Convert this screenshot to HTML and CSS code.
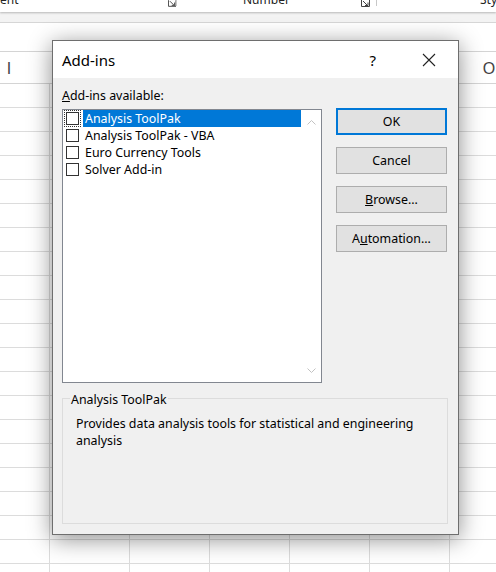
FILE: index.html
```html
<!DOCTYPE html>
<html lang="en">
<head>
  <meta charset="UTF-8">
  <meta name="viewport" content="width=device-width, initial-scale=1.0">
  <title>Add-ins</title>
  <link rel="stylesheet" href="styles.css">
</head>
<body>
  <div class="sheet">
    <div class="ribbon">
      <div class="grp grp-first">
        <span class="grp-label">ent</span>
        <svg class="launcher" width="9" height="7" viewBox="0 0 9 7"><path d="M0.5 0v6.5H8.5V0M2 1l5 5M4 5.5h3v-3" fill="none" stroke="#444" stroke-width="1"/></svg>
      </div>
      <div class="grp grp-number">
        <span class="grp-label">Number</span>
        <svg class="launcher" width="9" height="7" viewBox="0 0 9 7"><path d="M0.5 0v6.5H8.5V0M2 1l5 5M4 5.5h3v-3" fill="none" stroke="#444" stroke-width="1"/></svg>
      </div>
      <div class="grp grp-last">
        <span class="grp-label">Styles</span>
      </div>
    </div>
    <div class="ribbon-band"></div>
    <div class="formula"></div>
    <div class="col-heads">
      <span>I</span><span></span><span></span><span></span><span></span><span></span><span>O</span>
    </div>
    <div class="grid"></div>
  </div>

  <div class="dialog">
    <div class="titlebar">
      <span class="title">Add-ins</span>
      <span class="help">?</span>
      <svg class="close" width="14" height="14" viewBox="0 0 14 14"><path d="M1 1l12 12M13 1L1 13" stroke="#222" stroke-width="1.1" fill="none"/></svg>
    </div>
    <div class="dlg-body">
      <div class="top">
        <div class="left">
          <div class="caption"><u>A</u>dd-ins available:</div>
          <div class="listbox">
            <div class="items">
              <div class="item selected">
                <span class="chk-cell focus"><span class="chk"></span></span>
                <span class="item-text">Analysis ToolPak</span>
              </div>
              <div class="item">
                <span class="chk-cell"><span class="chk"></span></span>
                <span class="item-text">Analysis ToolPak - VBA</span>
              </div>
              <div class="item">
                <span class="chk-cell"><span class="chk"></span></span>
                <span class="item-text">Euro Currency Tools</span>
              </div>
              <div class="item">
                <span class="chk-cell"><span class="chk"></span></span>
                <span class="item-text">Solver Add-in</span>
              </div>
            </div>
            <div class="scroll">
              <svg width="9" height="5" viewBox="0 0 9 5"><path d="M0.5 4.5l4-4 4 4" fill="none" stroke="#c2c2c2" stroke-width="1"/></svg>
              <svg width="9" height="5" viewBox="0 0 9 5"><path d="M0.5 0.5l4 4 4-4" fill="none" stroke="#c2c2c2" stroke-width="1"/></svg>
            </div>
          </div>
        </div>
        <div class="buttons">
          <button class="btn default">OK</button>
          <button class="btn">Cancel</button>
          <button class="btn"><u>B</u>rowse...</button>
          <button class="btn">A<u>u</u>tomation...</button>
        </div>
      </div>
      <fieldset class="group">
        <legend>Analysis ToolPak</legend>
        <p>Provides data analysis tools for statistical and engineering analysis</p>
      </fieldset>
    </div>
  </div>
</body>
</html>
```

FILE: styles.css
```css
body {
  margin: 0;
  width: 496px;
  height: 572px;
  overflow: hidden;
  background: #fff;
  font-family: "Noto Sans", sans-serif;
  color: #000;
}

.sheet {
  width: 496px;
}

/* ribbon strip at the very top */
.ribbon {
  height: 12px;
  display: flex;
  background: #fff;
  overflow: hidden;
  font-size: 12px;
  box-shadow: 0 1px 2px rgba(0, 0, 0, 0.25);
  position: relative;
}

.grp {
  display: flex;
  align-items: flex-start;
  flex: none;
}

.grp-label {
  margin-top: -8px;
  line-height: 16px;
  color: #222;
}

.grp-first {
  width: 176px;
  border-right: 1px solid #c8c8c8;
  height: 6px;
}

.grp-first .launcher {
  margin-left: 149px;
}

.grp-number {
  width: 199px;
  border-right: 1px solid #c8c8c8;
  height: 6px;
}

.grp-number .grp-label {
  margin-left: 66px;
}

.grp-number .launcher {
  margin-left: 71px;
}

.grp-last .grp-label {
  margin-left: 103px;
}

.ribbon-band {
  height: 10px;
  background: #f3f3f3;
  border-bottom: 1px solid #d6d6d6;
}

.formula {
  height: 28px;
  border-bottom: 1px solid #d4d4d4;
}

.col-heads {
  height: 31px;
  display: flex;
  margin-left: -31px;
  border-bottom: 1px solid #d4d4d4;
  font-family: "Liberation Sans", sans-serif;
  font-size: 16px;
  color: #444;
}

.col-heads span {
  flex: none;
  width: 80px;
  text-align: center;
  line-height: 33px;
}

.grid {
  height: 488px;
  background-image:
    repeating-linear-gradient(to bottom, transparent 0 23px, #dcdcdc 23px 24px),
    repeating-linear-gradient(to right, transparent 0 49px, #dcdcdc 49px 50px, transparent 50px 80px);
  background-size: 496px 488px, 80px 488px;
}

/* dialog window */
.dialog {
  position: absolute;
  left: 52px;
  top: 40px;
  width: 405px;
  height: 493px;
  border: 1px solid #6e6e6e;
  background: #f0f0f0;
  box-shadow: 0 4px 22px rgba(0, 0, 0, 0.45);
  font-size: 12.4px;
}

.titlebar {
  height: 37px;
  background: #fff;
  display: flex;
  align-items: center;
  padding: 0 22px 0 9px;
}

.title {
  flex: 1;
  font-size: 15px;
}

.help {
  font-size: 15px;
  margin-right: 46px;
}

.dlg-body {
  padding: 10px 10px 11px 9px;
}

.top {
  display: flex;
  gap: 14px;
}

.left {
  width: 260px;
}

.caption {
  line-height: 16px;
  margin-bottom: 5px;
}

.listbox {
  height: 272px;
  border: 1px solid #828790;
  background: #fff;
  display: flex;
}

.items {
  flex: 1;
  padding-left: 1px;
}

.item {
  display: flex;
  height: 17px;
  align-items: center;
}

.chk-cell {
  width: 17px;
  height: 17px;
  display: flex;
  align-items: center;
  justify-content: center;
  box-sizing: border-box;
  margin-right: 2px;
}

.chk-cell.focus {
  border: 1px dotted #333;
}

.chk {
  width: 11px;
  height: 11px;
  border: 1px solid #333;
  background: #fff;
}

.item-text {
  flex: 1;
  height: 17px;
  line-height: 17px;
  padding-left: 2px;
  white-space: nowrap;
}

.item.selected .item-text {
  background: #0078d7;
  color: #fff;
}

.scroll {
  width: 20px;
  display: flex;
  flex-direction: column;
  justify-content: space-between;
  align-items: center;
  padding: 10px 0 9px;
}

.buttons {
  width: 111px;
  padding-top: 20px;
  display: flex;
  flex-direction: column;
  gap: 12px;
}

.btn {
  height: 27px;
  background: #e1e1e1;
  border: 1px solid #adadad;
  font-family: inherit;
  font-size: 12.4px;
  color: #000;
  padding: 0;
}

.btn.default {
  border: 2px solid #0078d7;
}

.group {
  box-sizing: border-box;
  margin: 5px 0 0;
  height: 136px;
  border: 1px solid #dcdcdc;
  padding: 0 0 0 13px;
}

.group legend {
  padding: 4px 1px 0;
  margin-left: -6px;
  line-height: 16px;
}

.group p {
  margin: 7px 0 0;
  line-height: 17px;
  width: 350px;
}
```
